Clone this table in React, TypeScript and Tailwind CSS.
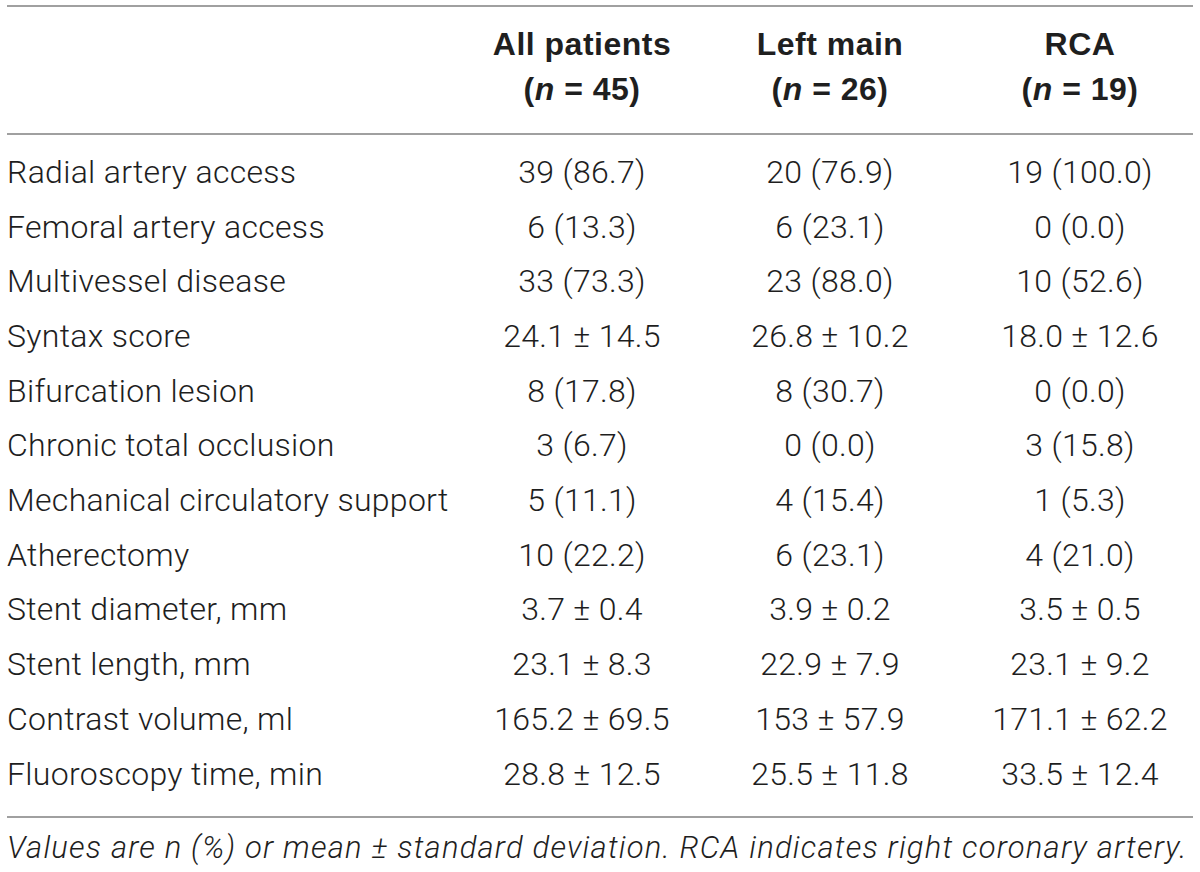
import React from 'react';

const rows: [string, string, string, string][] = [
  ['Radial artery access', '39 (86.7)', '20 (76.9)', '19 (100.0)'],
  ['Femoral artery access', '6 (13.3)', '6 (23.1)', '0 (0.0)'],
  ['Multivessel disease', '33 (73.3)', '23 (88.0)', '10 (52.6)'],
  ['Syntax score', '24.1 ± 14.5', '26.8 ± 10.2', '18.0 ± 12.6'],
  ['Bifurcation lesion', '8 (17.8)', '8 (30.7)', '0 (0.0)'],
  ['Chronic total occlusion', '3 (6.7)', '0 (0.0)', '3 (15.8)'],
  ['Mechanical circulatory support', '5 (11.1)', '4 (15.4)', '1 (5.3)'],
  ['Atherectomy', '10 (22.2)', '6 (23.1)', '4 (21.0)'],
  ['Stent diameter, mm', '3.7 ± 0.4', '3.9 ± 0.2', '3.5 ± 0.5'],
  ['Stent length, mm', '23.1 ± 8.3', '22.9 ± 7.9', '23.1 ± 9.2'],
  ['Contrast volume, ml', '165.2 ± 69.5', '153 ± 57.9', '171.1 ± 62.2'],
  ['Fluoroscopy time, min', '28.8 ± 12.5', '25.5 ± 11.8', '33.5 ± 12.4'],
];

const headers: [string, string][] = [
  ['All patients', '45'],
  ['Left main', '26'],
  ['RCA', '19'],
];

const Rule = () => <div className="h-[2px] bg-[#a0a0a0]" />;

export default function App() {
  return (
    <div className="w-[1200px] h-[872px] bg-white px-[7px] pt-[5px] text-[#1e1e1e] font-['Roboto','Liberation_Sans',sans-serif] font-light text-[32px] tracking-[0.3px]">
      <Rule />

      {/* column headings */}
      <div className="grid grid-cols-[451px_248px_248px_239px] pt-[14.5px] pb-[21.5px] font-['Liberation_Sans',Arial,sans-serif] font-bold leading-[45px] tracking-[0.5px] text-[#1f1f1f]">
        <div />
        {headers.map(([title, n], i) => (
          <div key={title} className={i === 2 ? 'text-center pl-[13px]' : 'text-center'}>
            <div>{title}</div>
            <div>
              (<span className="italic">n</span> = {n})
            </div>
          </div>
        ))}
      </div>

      <Rule />

      <div className="pt-[9.6px] pb-[15px]">
        {rows.map(([label, all, left, rca]) => (
          <div
            key={label}
            className="grid grid-cols-[451px_248px_248px_239px] h-[54.7px] items-center leading-[38px]"
          >
            <div className="whitespace-nowrap">{label}</div>
            <div className="text-center whitespace-nowrap">{all}</div>
            <div className="text-center whitespace-nowrap">{left}</div>
            <div className="text-center whitespace-nowrap pl-[13px]">{rca}</div>
          </div>
        ))}
      </div>

      <Rule />

      <p className="mt-[12px] leading-[36px] italic text-[31px] tracking-[1.2px] whitespace-nowrap">
        Values are n (%) or mean ± standard deviation. RCA indicates right coronary artery.
      </p>
    </div>
  );
}
